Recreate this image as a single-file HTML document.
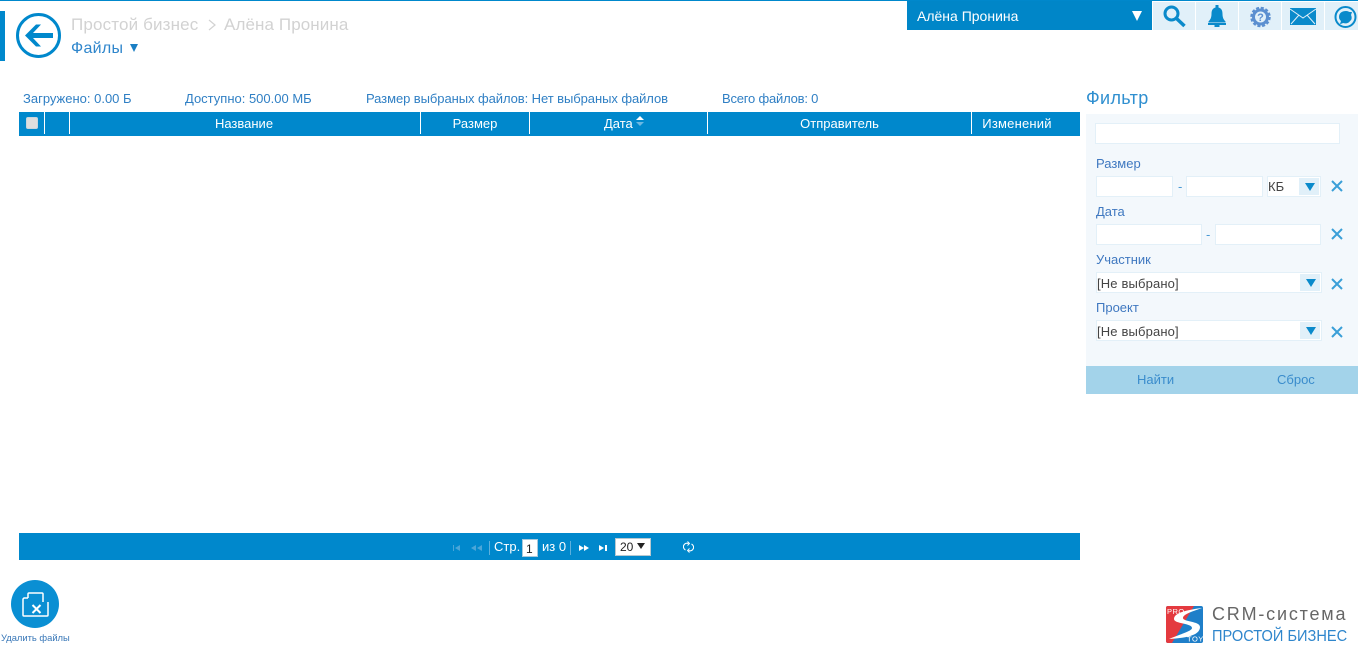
<!DOCTYPE html>
<html><head><meta charset="utf-8"><style>
html,body{margin:0;padding:0;background:#fff}
body{position:relative;width:1358px;height:659px;overflow:hidden;font-family:"Liberation Sans","DejaVu Sans",sans-serif;font-size:13px;color:#2f7fc4}
.a,.t,.i{position:absolute;box-sizing:border-box}
.t{white-space:nowrap;line-height:16px}
.inp{position:absolute;box-sizing:border-box;background:#fff;border:1px solid #e3f0f8}
.th{position:absolute;top:116px;color:#fff;text-align:center;font-size:13px;line-height:16px;font-weight:400}
.sep{position:absolute;top:112px;width:1px;height:22px;background:#fff}
.ic{position:absolute;top:2px;height:28px;background:#e1f0f9}
.drop{position:absolute;background:#e1f0f9}
.drop:after{content:"";position:absolute;left:6px;top:5px;border-left:5px solid transparent;border-right:5px solid transparent;border-top:8px solid #0a8acb}
.lb{color:#3f78c0}
</style></head><body>
<div class="a" style="left:0;top:0;width:1358px;height:1px;background:#0088cc"></div>
<div class="a" style="left:0;top:11px;width:5px;height:50px;background:#0088cc"></div>
<svg class="a" style="left:15px;top:12px" width="46" height="46" viewBox="0 0 46 46"><circle cx="23.500" cy="23.500" r="21" fill="none" stroke="#0088cc" stroke-width="3"/><path d="M10 23.500L21 12.500h5l-8 8.500h20v5H18l8 8.500h-5z" fill="#0088cc"/></svg>
<div class="t" style="left:71px;top:15px;font-size:17px;line-height:20px;color:#d2d2d2;letter-spacing:.15px">Простой бизнес</div>
<svg class="a" style="left:206px;top:18px" width="12" height="14"><path d="M3 2l6 5-6 5" fill="none" stroke="#d2d2d2" stroke-width="1.200"/></svg>
<div class="t" style="left:224px;top:15px;font-size:17px;line-height:20px;color:#d2d2d2;letter-spacing:.1px">Алёна Пронина</div>
<div class="t" style="left:71px;top:39px;font-size:16px;line-height:20px;color:#2f86cc;letter-spacing:.3px">Файлы</div>
<div class="a" style="left:130px;top:44px;border-left:4.500px solid transparent;border-right:4.500px solid transparent;border-top:8px solid #1b7fc4"></div>

<div class="a" style="left:907px;top:1px;width:245px;height:29px;background:#0086c8"></div>
<div class="t" style="left:917px;top:8px;color:#fff;font-size:14px">Алёна Пронина</div>
<div class="a" style="left:1132px;top:11px;border-left:5px solid transparent;border-right:5px solid transparent;border-top:10px solid #fff"></div>
<div class="ic" style="left:1153px;width:42px"></div>
<div class="ic" style="left:1196px;width:42px"></div>
<div class="ic" style="left:1239px;width:42px"></div>
<div class="ic" style="left:1282px;width:42px"></div>
<div class="ic" style="left:1325px;width:33px"></div>
<svg class="a" style="left:1153px;top:2px" width="205" height="28" viewBox="0 0 205 28">
<circle cx="18.500" cy="11.500" r="6.500" fill="none" stroke="#0a8acb" stroke-width="3"/><path d="M23 16l8.500 8" stroke="#0a8acb" stroke-width="3.500"/>
<path d="M62.500 3h3v2.500c3 .8 4 3 4 6.500 0 4 1.500 6 3 7.500v1H55.500v-1c1.500-1.500 3-3.500 3-7.500 0-3.500 1-5.700 4-6.500z" fill="#0a8acb"/><rect x="55" y="21" width="18" height="2" fill="#0a8acb"/><rect x="61.500" y="23" width="5" height="2" fill="#0a8acb"/>
<circle cx="107.500" cy="15" r="7" fill="none" stroke="#5b8fd0" stroke-width="3"/><circle cx="107.500" cy="15" r="9" fill="none" stroke="#5b8fd0" stroke-width="2.500" stroke-dasharray="3 1.710"/><text x="107.500" y="19" font-size="11" font-weight="700" text-anchor="middle" fill="#5b8fd0">?</text>
<rect x="137" y="6" width="26" height="17" fill="#0a8acb"/><path d="M137 7l13 9 13-9M138 22l8-9M162 22l-8-9" fill="none" stroke="#e1f0f9" stroke-width="1"/>
<circle cx="192.500" cy="15" r="10" fill="none" stroke="#0a8acb" stroke-width="2"/><path d="M186 15c0-4 3-6 7-6 2 0 3 1 4 1l2 0-1 3c1 2 1 5-1 6-1 2-4 3-7 2-2 1-3 1-3 1l1-3c-1-1-2-2-2-4z" fill="#0a8acb"/>
</svg>

<div class="t" style="left:23px;top:91px">Загружено: 0.00 Б</div>
<div class="t" style="left:185px;top:91px">Доступно: 500.00 МБ</div>
<div class="t" style="left:366px;top:91px;letter-spacing:-.07px">Размер выбраных файлов: Нет выбраных файлов</div>
<div class="t" style="left:722px;top:91px;letter-spacing:-.2px">Всего файлов: 0</div>

<div class="a" style="left:19px;top:112px;width:1061px;height:24px;background:#0088cc"></div>
<div class="sep" style="left:44px"></div><div class="sep" style="left:69px"></div><div class="sep" style="left:420px"></div><div class="sep" style="left:529px"></div><div class="sep" style="left:707px"></div><div class="sep" style="left:971px"></div>
<div class="a" style="left:26px;top:117px;width:12px;height:12px;background:#dedede;border:1px solid #c8d6de;border-radius:2px"></div>
<div class="th" style="left:69px;width:350px">Название</div>
<div class="th" style="left:421px;width:108px">Размер</div>
<div class="t" style="left:604px;top:116px;color:#fff">Дата</div>
<div class="a" style="left:636px;top:116px;border-left:4px solid transparent;border-right:4px solid transparent;border-bottom:4px solid #fff"></div>
<div class="a" style="left:636px;top:122px;border-left:4px solid transparent;border-right:4px solid transparent;border-top:4px solid #6cb8e2"></div>
<div class="th" style="left:708px;width:263px">Отправитель</div>
<div class="th" style="left:972px;width:90px;letter-spacing:.2px">Изменений</div>

<div class="t" style="left:1086px;top:87px;font-size:18px;line-height:22px;color:#2f8fd0;letter-spacing:.35px">Фильтр</div>
<div class="a" style="left:1086px;top:114px;width:272px;height:252px;background:#f3f8fc"></div>
<div class="inp" style="left:1095px;top:123px;width:245px;height:21px"></div>
<div class="t lb" style="left:1096px;top:156px">Размер</div>
<div class="inp" style="left:1096px;top:176px;width:77px;height:21px"></div>
<div class="t" style="left:1178px;top:179px;color:#4a9ad4">-</div>
<div class="inp" style="left:1186px;top:176px;width:77px;height:21px"></div>
<div class="inp" style="left:1267px;top:176px;width:54px;height:21px"></div>
<div class="t" style="left:1268px;top:179px;color:#444;font-size:13px">КБ</div>
<div class="drop" style="left:1299px;top:178px;width:20px;height:17px"></div>
<div class="t lb" style="left:1096px;top:204px">Дата</div>
<div class="inp" style="left:1096px;top:224px;width:106px;height:21px"></div>
<div class="t" style="left:1206px;top:227px;color:#4a9ad4">-</div>
<div class="inp" style="left:1215px;top:224px;width:106px;height:21px"></div>
<div class="t lb" style="left:1096px;top:252px">Участник</div>
<div class="inp" style="left:1096px;top:272px;width:226px;height:21px"></div>
<div class="t" style="left:1097px;top:276px;color:#444;font-size:13px;letter-spacing:.15px">[Не выбрано]</div>
<div class="drop" style="left:1300px;top:274px;width:20px;height:17px"></div>
<div class="t lb" style="left:1096px;top:300px">Проект</div>
<div class="inp" style="left:1096px;top:320px;width:226px;height:21px"></div>
<div class="t" style="left:1097px;top:324px;color:#444;font-size:13px;letter-spacing:.15px">[Не выбрано]</div>
<div class="drop" style="left:1300px;top:322px;width:20px;height:17px"></div>
<svg class="a" style="left:1330px;top:180px" width="14" height="160"><g stroke="#3a9fd8" stroke-width="2" fill="none"><path d="M2 1l10 10M12 1L2 11"/><path d="M2 49l10 10M12 49L2 59"/><path d="M2 99l10 10M12 99L2 109"/><path d="M2 147l10 10M12 147L2 157"/></g></svg>
<div class="a" style="left:1086px;top:366px;width:272px;height:28px;background:#a3d3ea"></div>
<div class="t" style="left:1137px;top:372px;color:#3a8ccc">Найти</div>
<div class="t" style="left:1277px;top:372px;color:#3a8ccc">Сброс</div>

<div class="a" style="left:19px;top:533px;width:1061px;height:27px;background:#0088cc"></div>
<svg class="a" style="left:450px;top:540px" width="240" height="16"><g fill="#4ba6d8"><path d="M3 5h1v6H3zM5 8l5-3v6zM21 8l5-3v6zM27 8l5-3v6z"/></g><rect x="39" y="1" width="1" height="14" fill="#5db0dd"/><rect x="120" y="1" width="1" height="14" fill="#5db0dd"/><g fill="#fff"><path d="M129 5l5 3-5 3zM134 5l5 3-5 3zM149 5l5 3-5 3zM155 5h2v6h-2z"/></g></svg>
<div class="t" style="left:494px;top:539px;color:#fff">Стр.</div>
<div class="a" style="left:522px;top:539px;width:16px;height:18px;background:#fff;border:1px solid #a9c9dc;color:#222;font-size:12px;line-height:18px;padding-left:3px">1</div>
<div class="t" style="left:542px;top:539px;color:#fff">из 0</div>
<div class="a" style="left:615px;top:538px;width:36px;height:18px;background:#fff;border:1px solid #b8c8d0;color:#222;font-size:12px;line-height:16px;padding-left:4px">20</div>
<div class="a" style="left:637px;top:543px;border-left:4px solid transparent;border-right:4px solid transparent;border-top:6px solid #222"></div>
<svg class="a" style="left:683px;top:541px" width="11" height="12" fill="none" stroke="#fff" stroke-width="1.100"><path d="M2.500 9A3.500 3.500 0 0 1 5.500 2.500M8.500 3A3.500 3.500 0 0 1 5.500 9.500"/><path d="M4.500 .5l2 2-2 2M6.500 7.500l-2 2 2 2" stroke-width=".9"/></svg>

<svg class="a" style="left:11px;top:580px" width="48" height="48" viewBox="0 0 48 48"><circle cx="24" cy="24" r="24" fill="#0a8fd3"/><path d="M17 18v-4q0-1 1-1h13q1 0 1 1v8" fill="none" stroke="#fff" stroke-width="1.500"/><path d="M17 18h-4l-1 1v16q0 1 1 1h23q1 0 1-1V22" fill="none" stroke="#fff" stroke-width="1.500"/><path d="M21.500 25l8 8M29.500 25l-8 8" stroke="#fff" stroke-width="2"/></svg>
<div class="t" style="left:1px;top:631px;font-size:9.400px;line-height:14px;color:#3a78b8">Удалить файлы</div>

<svg class="a" style="left:1166px;top:606px" width="37" height="37" viewBox="0 0 37 37"><rect width="37" height="37" rx="2" fill="#1f7fc9"/><path d="M0 2q0-2 2-2h26L6 37H2q-2 0-2-2z" fill="#e43a3f"/><path d="M36 2C20 4 8 7 8 13C8 18 26 17 26 22C26 25 15 28 3 33C18 32 34 30 34 21C34 15 17 16 17 12C17 8 28 5 36 2z" fill="#fff"/><text x="1" y="8" font-size="7.500" fill="#fff" letter-spacing=".5">PRO</text><text x="21" y="35.500" font-size="7.500" fill="#fff" letter-spacing=".5">TOY</text></svg>
<div class="t" style="left:1212px;top:603px;font-size:18px;line-height:22px;letter-spacing:1.800px;color:#666">CRM-система</div>
<div class="t" style="left:1212px;top:627px;font-size:16px;line-height:20px;color:#2f86cc;transform:scaleX(.912);transform-origin:0 0">ПРОСТОЙ БИЗНЕС</div>
</body></html>
